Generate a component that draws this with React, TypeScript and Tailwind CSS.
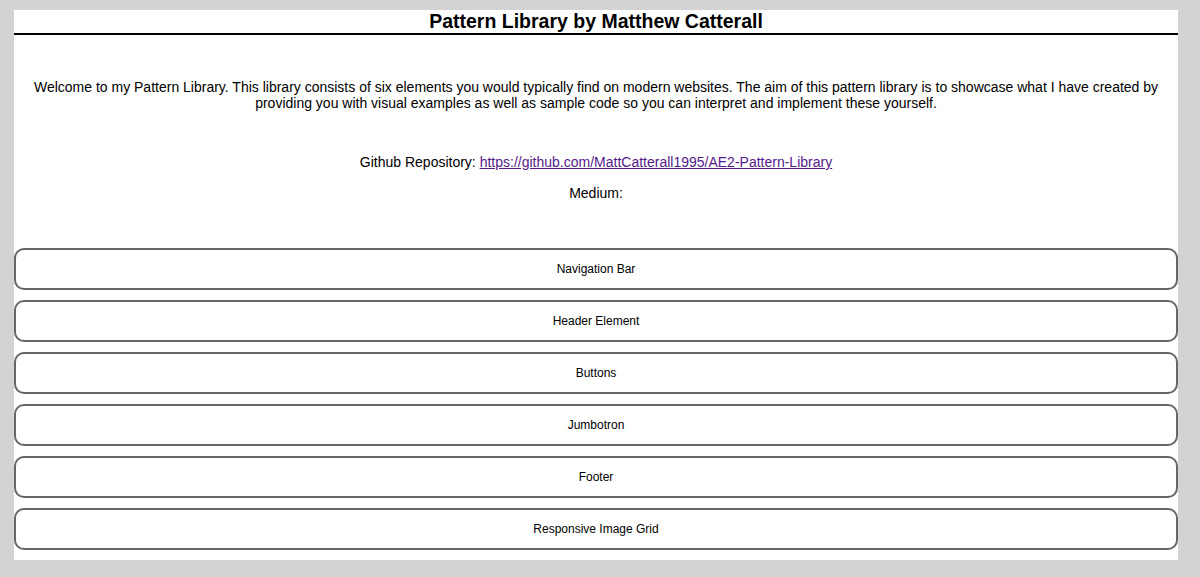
import React from "react";

const sections = [
    "Navigation Bar",
    "Header Element",
    "Buttons",
    "Jumbotron",
    "Footer",
    "Responsive Image Grid",
];

export default function App() {
    return (
        <div
            className="min-h-[577px] bg-[#d3d3d3] pt-[10px] pl-[14px] pr-[22px] pb-[17px]"
            style={{ fontFamily: '"Liberation Sans", Arial, sans-serif' }}
        >
            <div className="bg-white pb-[10px] text-black">
                {/* Page title */}
                <h1 className="h-[25px] border-b-2 border-black text-center text-[19.5px] font-bold leading-[23px]">
                    Pattern Library by Matthew Catterall
                </h1>

                {/* Intro text */}
                <p className="mt-[44px] px-[12px] text-center text-[14px] leading-[16px]">
                    Welcome to my Pattern Library. This library consists of six
                    elements you would typically find on modern websites. The
                    aim of this pattern library is to showcase what I have
                    created by providing you with visual examples as well as
                    sample code so you can interpret and implement these
                    yourself.
                </p>

                <p className="mt-[43px] text-center text-[14px] leading-[16px]">
                    Github Repository:{" "}
                    <a href="#" className="text-[#551a8b] underline">
                        https://github.com/MattCatterall1995/AE2-Pattern-Library
                    </a>
                </p>
                <p className="mt-[15px] text-center text-[14px] leading-[16px]">
                    Medium:
                </p>

                {/* Section buttons */}
                <div className="mt-[47px] flex flex-col gap-[10px]">
                    {sections.map((name) => (
                        <button
                            key={name}
                            className="h-[42px] w-full rounded-[10px] border-2 border-[#666] bg-white text-center text-[12px] text-black"
                        >
                            {name}
                        </button>
                    ))}
                </div>
            </div>
        </div>
    );
}
